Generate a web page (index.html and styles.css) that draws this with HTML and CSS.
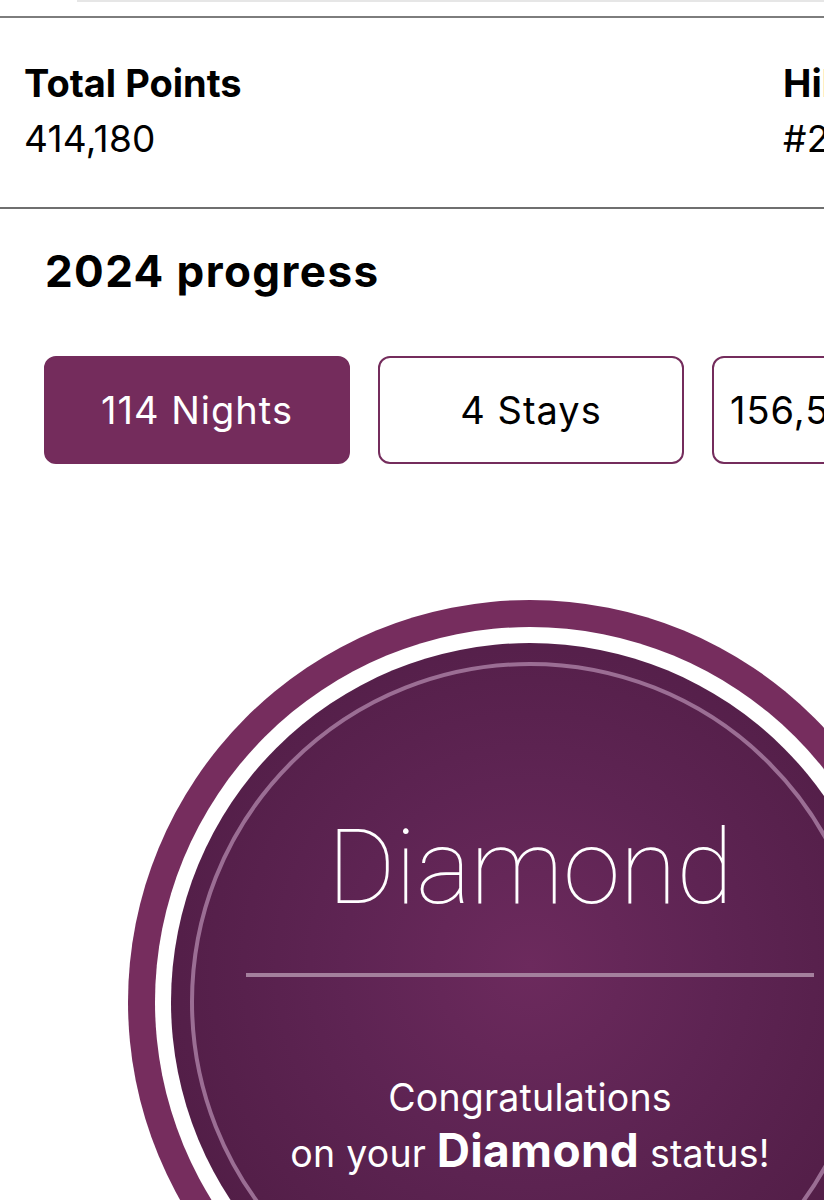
FILE: index.html
```html
<!DOCTYPE html>
<html>
<head>
<meta charset="utf-8">
<link rel="stylesheet" href="styles.css">
</head>
<body>
<div class="page">
  <div class="topbar"><div class="topstrip"></div></div>
  <section class="stats">
    <div class="stat">
      <div class="stat-label">Total Points</div>
      <div class="stat-value">414,180</div>
    </div>
    <div class="stat stat-second">
      <div class="stat-label">Hilton Honors</div>
      <div class="stat-value">#2</div>
    </div>
  </section>
  <h2 class="heading">2024 progress</h2>
  <div class="chips">
    <div class="chip chip-active">114 Nights</div>
    <div class="chip">4 Stays</div>
    <div class="chip">156,520 Points</div>
  </div>
  <div class="badge">
    <div class="badge-gap">
      <div class="badge-inner">
        <div class="badge-ring">
          <div class="tier">Diamond</div>
          <div class="divider"></div>
          <div class="congrats">Congratulations<br>on your <b>Diamond</b> status!</div>
        </div>
      </div>
    </div>
  </div>
</div>
</body>
</html>
```

FILE: styles.css
```css
html, body {
  margin: 0;
  padding: 0;
  background: #fff;
  overflow: hidden;
}
.page {
  width: 824px;
  height: 1200px;
  overflow: hidden;
  font-family: Inter, "Noto Sans", sans-serif;
  color: #000;
}
.topbar {
  height: 16px;
  border-bottom: 2px solid #7d7d7d;
  padding-left: 77px;
}
.topstrip {
  height: 2px;
  background: #e6e6e6;
}
.stats {
  display: flex;
  height: 191px;
  border-bottom: 2px solid #6f6f6f;
  padding-left: 24px;
  box-sizing: border-box;
  padding-top: 42px;
}
.stat {
  flex: 0 0 759px;
  white-space: nowrap;
}
.stat-second {
  flex: 0 0 auto;
}
.stat-label {
  font-size: 38px;
  font-weight: 700;
  letter-spacing: 0;
  line-height: 46px;
}
.stat-value {
  font-size: 37px;
  font-weight: 400;
  letter-spacing: 0.3px;
  line-height: 65px;
}
.heading {
  margin: 0;
  padding: 36px 0 0 45px;
  font-size: 44px;
  font-weight: 700;
  line-height: 52px;
  letter-spacing: 1.4px;
}
.chips {
  display: flex;
  gap: 28px;
  padding: 59px 0 0 44px;
}
.chip {
  flex: 0 0 306px;
  height: 108px;
  box-sizing: border-box;
  border: 2px solid #742c5c;
  border-radius: 12px;
  display: flex;
  align-items: center;
  justify-content: center;
  font-size: 38px;
  letter-spacing: 1px;
  white-space: nowrap;
  overflow: hidden;
  background: #fff;
}
.chip:last-child {
  justify-content: flex-start;
  padding-left: 16px;
}
.chip-active {
  background: #742c5c;
  color: #fff;
}
.badge {
  width: 804px;
  height: 804px;
  margin: 136px 0 0 128px;
  border-radius: 50%;
  background: #762d5e;
  padding: 27px;
  box-sizing: border-box;
}
.badge-gap {
  width: 100%;
  height: 100%;
  border-radius: 50%;
  background: #fff;
  padding: 16px;
  box-sizing: border-box;
}
.badge-inner {
  width: 100%;
  height: 100%;
  border-radius: 50%;
  background: radial-gradient(circle at 50% 45%, #6c2a5d 0%, #5e2453 35%, #521e47 72%, #481a3e 100%);
  padding: 19px;
  box-sizing: border-box;
}
.badge-ring {
  width: 100%;
  height: 100%;
  border-radius: 50%;
  border: 4px solid #9b6e94;
  box-sizing: border-box;
  display: flex;
  flex-direction: column;
  align-items: center;
  padding-top: 142px;
  color: #fff;
}
.tier {
  font-family: Roboto, sans-serif;
  font-weight: 100;
  font-size: 104px;
  line-height: 120px;
  letter-spacing: -0.5px;
}
.divider {
  width: 568px;
  height: 4px;
  background: #a4809d;
  margin-top: 45px;
}
.congrats {
  margin-top: 94px;
  text-align: center;
  font-size: 37.5px;
  line-height: 53px;
  letter-spacing: 0.2px;
}
.congrats b {
  font-size: 46px;
  font-weight: 700;
  letter-spacing: 0.3px;
}
```
